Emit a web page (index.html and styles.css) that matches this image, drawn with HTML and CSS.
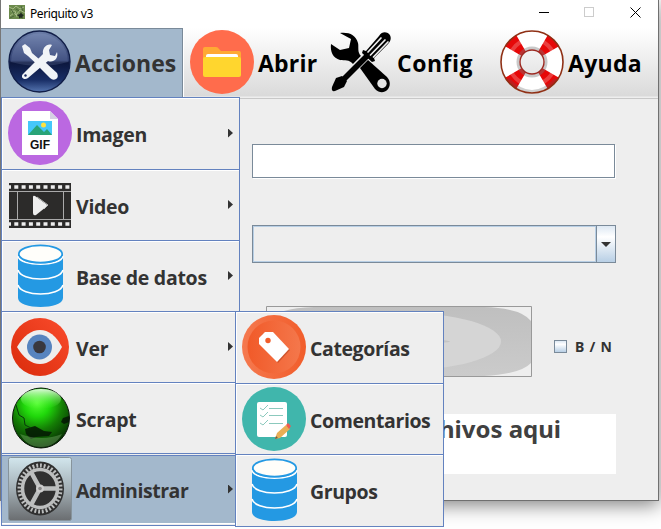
FILE: index.html
```html
<!DOCTYPE html>
<html lang="es">
<head>
<meta charset="utf-8">
<title>Periquito v3</title>
<link rel="stylesheet" href="styles.css">
</head>
<body>
<svg width="0" height="0" class="defs">
  <defs>
    <linearGradient id="navy" x1="0" y1="0" x2="0" y2="1"><stop offset="0" stop-color="#6d7fa9"/><stop offset=".48" stop-color="#303f70"/><stop offset=".52" stop-color="#0c173d"/><stop offset=".8" stop-color="#182d65"/><stop offset="1" stop-color="#5575b0"/></linearGradient>
    <linearGradient id="red" x1="1" y1="0" x2="0" y2="1"><stop offset="0" stop-color="#fa4b2c"/><stop offset="1" stop-color="#d92b0b"/></linearGradient>
    <linearGradient id="orange"><stop offset="0" stop-color="#f5794f"/><stop offset="1" stop-color="#f15d2b"/></linearGradient>
    <linearGradient id="orange2"><stop offset="0" stop-color="#f15a29"/><stop offset="1" stop-color="#f4774b"/></linearGradient>
    <radialGradient id="green" cx=".43" cy=".25" r=".75"><stop offset="0" stop-color="#55ff32"/><stop offset=".3" stop-color="#20d80b"/><stop offset=".6" stop-color="#147d05"/><stop offset="1" stop-color="#062c03"/></radialGradient>
    <linearGradient id="gloss" x1="0" y1="0" x2="0" y2="1"><stop offset="0" stop-color="#fff" stop-opacity=".85"/><stop offset="1" stop-color="#5f3" stop-opacity="0"/></linearGradient>
    <linearGradient id="steel" x1="0" y1="0" x2="0" y2="1"><stop offset="0" stop-color="#d2e6ed"/><stop offset=".5" stop-color="#a3afb5"/><stop offset="1" stop-color="#6a6d70"/></linearGradient>
    <symbol id="db" viewBox="0 0 64 64">
      <path d="M10 10v44c0 12 45 12 45 0V10z" fill="#2499e3"/>
      <path d="M10 12c2 11 43 11 45 0M10 26c3 12 42 12 45 0M10 41c3 12 42 12 45 0" fill="none" stroke="#fff" stroke-width="1.6"/>
      <ellipse cx="32.500" cy="10" rx="21.700" ry="8.700" fill="#fffefa" stroke="#2499e3" stroke-width="1.700"/>
    </symbol>
  </defs>
</svg>
<div class="desktop">
  <div class="window">
    <header class="titlebar">
      <svg class="app-icon" width="16" height="14" viewBox="0 0 16 14"><path fill="#6c8a4c" d="M0 0h16v14H0z"/><path d="M0 2l4 2 3-3 4 3 4-2M1 11l4-3 2 2 4-5 5 3M2 6h4l2 6" stroke="#a5b985" fill="none"/><path d="M2 4l3 5M7 4l3 2M12 1l2 5M1 13l4-2" stroke="#4c673b" fill="none"/><path fill="#222d22" d="M12 7l1 2 2 1-1.500 1.500v2L12 12.500l-2 1v-2L8 10l3-1z"/></svg>
      <span class="title">Periquito v3</span>
      <svg class="controls" width="104" height="12" viewBox="0 0 104 12" fill="none" shape-rendering="crispEdges"><path d="M0 6.500h10" stroke="#000"/><path d="M45.500 1.500h9v9h-9z" stroke="#ccc"/><path d="M91.500 1.500l10 10M101.500 1.500l-10 10" stroke="#000" shape-rendering="auto"/></svg>
    </header>
    <nav class="menubar">
      <div class="menu active m-actions">
        <svg class="icon" viewBox="0 0 64 64"><circle cx="31.500" cy="31.500" r="30.500" fill="url(#navy)" stroke="#111e48" stroke-width="1.400"/><path d="M3 32a28.500 28.500 0 0 1 57 0Q32 40 3 32z" fill="#a9b9df" opacity=".17"/><path d="M14 16l3-2 5 4 2 5 14 12-4 4-14-13-4-3z" fill="#f1f4f7"/><path d="M33 35l4-3 12 11q2 4-1 6-3 2-6-1L32 38z" fill="#f1f4f7"/><path d="M15 44l20-20c-1-6 4-11 9-9l-3 5 1 5 5 1 2-4c2 7-4 11-9 9L20 48c-4 3-8-1-5-4z" fill="#f1f4f7"/><circle cx="17.500" cy="45.500" r="1.200" fill="#18285c"/></svg>
        <span>Acciones</span>
      </div>
      <div class="menu m-open">
        <svg class="icon" viewBox="0 0 64 64"><circle cx="32" cy="32" r="32" fill="#ff6c4c"/><path d="M13 19q0-2 2-2h11q2 0 3 2l2 2h18q2 0 2 2v15H13z" fill="#ffa934"/><path d="M16 26q0-2 2-2h28q2 0 2 2v4H16z" fill="#fff"/><path d="M13 29q0-2 2-2h34q2 0 2 2v16q0 2-2 2H15q-2 0-2-2z" fill="#ffd62e"/></svg>
        <span>Abrir</span>
      </div>
      <div class="menu m-config">
        <svg class="icon" viewBox="0 0 64 64"><path d="M11 3c9-1 16 2 18 10 1 4-1 9 3 13l-8 8c-4-5-8-3-13-4C4 28 1 22 2 14l9 6 9-2 2-9z"/><path d="M31 38l8-8 19 17c8 9-3 21-12 12z"/><circle cx="53" cy="53.500" r="4.700" fill="#e4e4e4"/><path d="M13 51L38 25" fill="none" stroke="#e8e8e8" stroke-width="7"/><path d="M11 49l25-25 4 4-25 25z"/><path d="M3 57l4-9 6-2 5 5-3 6-9 4q-4 1-3-4z"/><path d="M34 20l3 1L50 6c3-5 8-4 10-2s3 6-1 10L45 28l1 3-3 1-10-9z"/><path d="M39 22L52 8M41.500 25L56 10M44.500 27L59 12" stroke="#eee" stroke-width="1.700" stroke-linecap="round"/></svg>
        <span>Config</span>
      </div>
      <div class="menu m-help">
        <svg class="icon" viewBox="0 0 64 64"><circle cx="32" cy="32" r="21.800" fill="none" stroke="#fff" stroke-width="19"/><circle cx="32" cy="32" r="21.800" fill="none" stroke="#e60808" stroke-width="19" pathLength="360" stroke-dasharray="29 61" stroke-dashoffset="-30.500"/><g fill="none"><circle cx="32" cy="32" r="23" stroke="#fff" stroke-width="4" opacity=".22"/><circle cx="32" cy="32" r="14" stroke="#777" stroke-width="3" opacity=".4"/><path d="M8 49q24 25 48 0" stroke="#555" stroke-width="3" opacity=".28"/><circle cx="32" cy="32" r="31" stroke="#8f3015" stroke-width="1.600"/><circle cx="32" cy="32" r="12" stroke="#9b2820" stroke-width="1.400"/></g></svg>
        <span>Ayuda</span>
      </div>
    </nav>
    <main class="content">
      <div class="field"></div>
      <div class="combo"><div class="value"></div><div class="drop"><svg width="10" height="5" viewBox="0 0 10 5"><path d="M0 0h10L5 5z" fill="#333"/></svg></div></div>
      <div class="options">
        <svg class="image-button" width="266" height="71" viewBox="0 0 266 71"><defs><linearGradient id="disc" x1="0" y1="0" x2="0" y2="1"><stop stop-color="#bfbfbf"/><stop offset="1" stop-color="#cbcbcb"/></linearGradient></defs><path fill="#eee" d="M0 0h266v71H0z"/><path d="M48 1h170q37 1 47 14v42q-10 11-47 13H48Q8 68 1 55V15Q11 2 48 1z" fill="url(#disc)"/><ellipse cx="133" cy="35.500" rx="102" ry="29" fill="#d5d5d5"/><ellipse cx="150" cy="35.500" rx="34" ry="2" fill="#c4c4c4"/><path fill="none" stroke="#999" d="M.5.5h265v70H.5z"/></svg>
        <div class="check"><i></i><span>B / N</span></div>
      </div>
      <div class="dropzone"><span>hivos aqui</span></div>
    </main>
  </div>

  <div class="popup main-popup">
    <div class="item"><svg class="icon" viewBox="0 0 64 64"><circle cx="32" cy="32" r="32" fill="#bb68e1"/><path d="M14 10h28l8 8v36H14z" fill="#fff"/><path d="M42 10l8 8h-8z" fill="#d5d1e3"/><path d="M20 20h24v14H20z" fill="#46c7fa"/><circle cx="35.500" cy="24" r="2.500" fill="#ffe240"/><path d="M20 34l9-10 7 7 3-3 5 6z" fill="#29a477"/><text x="32" y="48" text-anchor="middle" class="gif">GIF</text></svg><span>Imagen</span><b class="arrow"></b></div>
    <div class="item"><svg class="icon" viewBox="0 0 64 64"><path fill="#2c2b2a" d="M1 10h62v45H1z"/><path d="M1 14h62M1 51h62" stroke="#eee" stroke-width="3.600" stroke-dasharray="4 3.300" stroke-dashoffset="2"/><path d="M1 18.500h62M1 46.500h62M9.500 18v29M55.500 18v29" stroke="#aaa"/><path d="M25 24q0-2 2-1l11 8q2 1 0 3l-10 8q-3 1-3-2z" fill="#eee"/><path d="M29 24l11 8-4 4" fill="none" stroke="#bbb"/></svg><span>Video</span><b class="arrow"></b></div>
    <div class="item"><svg class="icon"><use href="#db"/></svg><span>Base de datos</span><b class="arrow"></b></div>
    <div class="item narrow"><svg class="icon" viewBox="0 0 64 64"><circle cx="32" cy="32" r="29" fill="url(#red)"/><path d="M9 32q10-17 23-17t22 17q-9 17-22 17T9 32z" fill="#eee"/><circle cx="31.500" cy="32" r="12.500" fill="#5784bf"/><circle cx="31.500" cy="32" r="6.300" fill="#39373d"/></svg><span>Ver</span><b class="arrow"></b></div>
    <div class="item narrow"><svg class="icon" viewBox="0 0 64 64"><ellipse cx="33" cy="32" rx="28.500" ry="30" fill="url(#green)" stroke="#0b180b"/><ellipse cx="33" cy="13" rx="20" ry="10" fill="url(#gloss)"/><path d="M17 43l10-3 9 5 8 1-3 4-13 1-5 2-5-5zM55 32l6-2v6l-5 2-3-2z" fill="#031604" opacity=".85"/><path d="M8 19l3 10 5 3 1 7 6 3" fill="none" stroke="#07390a"/><path d="M12 48q22 8 42 0-7 13-21 13T12 48z" fill="#a5d896" opacity=".3"/></svg><span>Scrapt</span></div>
    <div class="item narrow selected"><svg class="icon" viewBox="0 0 64 64"><rect x=".5" y=".5" width="63" height="63" rx="2" fill="url(#steel)" stroke="#87949c"/><ellipse cx="32" cy="31.500" rx="24" ry="27" fill="#303030"/><g fill="none" stroke="#bcbebe"><ellipse cx="32" cy="31.500" rx="20.500" ry="23" stroke-width="4" pathLength="144" stroke-dasharray="2 2"/><ellipse cx="32" cy="31.500" rx="17.500" ry="19" stroke-width="3.500"/><path d="M32 31.500L23 15M32 31.500h18M32 31.500L23 48" stroke-width="4.500"/></g><circle cx="32" cy="31.500" r="4" fill="#ccc"/><circle cx="32" cy="31.500" r="1.800" fill="#888"/></svg><span>Administrar</span><b class="arrow"></b></div>
  </div>

  <div class="popup sub-popup">
    <div class="item"><svg class="icon" viewBox="0 0 64 64"><circle cx="32" cy="32" r="32" fill="url(#orange)"/><circle cx="32" cy="32" r="26.500" fill="url(#orange2)"/><path d="M20 19l6-1 22 17-12 13-17-20z" fill="#b84420" opacity=".6"/><path d="M17 23l6-6h8l16 17-12 13L17 29z" fill="#fff"/><circle cx="26" cy="25.500" r="2.700" fill="#f15d2b"/></svg><span>Categorías</span></div>
    <div class="item"><svg class="icon" viewBox="0 0 64 64"><circle cx="32" cy="32" r="32" fill="#40b6ac"/><rect x="15" y="15" width="30" height="35" rx="2" fill="#fff"/><path d="M18 21l3 2 5-5M18 28l3 2 5-5M18 36l3 2 5-5M27 21.500h14M27 28.500h14M27 36.500h14" fill="none" stroke="#8bc9bd"/><path d="M33 52l2-6 9-8 4 4-10 9z" fill="#e9ae56"/><path d="M44 38l2-2 3 3-2 3z" fill="#f05b50"/><path d="M33 52l1-3 2 2z" fill="#705c42"/></svg><span>Comentarios</span></div>
    <div class="item"><svg class="icon"><use href="#db"/></svg><span>Grupos</span></div>
  </div>
</div>
</body>
</html>
```
FILE: styles.css
```css
* { box-sizing: border-box; }
body { margin: 0; overflow: hidden; font-family: "Open Sans", sans-serif; color: #333; }
.defs { position: absolute; }
.desktop { position: relative; width: 661px; height: 529px; overflow: hidden; background: #fff; padding-left: 1px; }
.desktop::before { content: ""; position: absolute; left: 0; top: 0; width: 1px; height: 501px; background: #777; }
.window { width: 658px; height: 501px; background: #eee; border-right: 1px solid #707070; border-bottom: 1px solid #707070; box-shadow: 0 4px 18px rgba(0,0,0,.5); }
.titlebar { height: 28px; background: #fff; display: flex; align-items: center; padding: 0 15px 4px 8px; }
.title { font: 12px "Noto Sans", sans-serif; color: #000; margin: 2px 0 0 5px; letter-spacing: -.4px; }
.controls { margin-left: auto; }
.menubar { height: 71px; display: flex; background: linear-gradient(#fff, #dadada 68px, #eee 69px, #eee 70px); border-bottom: 1px solid #c8c8c8; color: #000; }
.menu { display: flex; align-items: center; font-size: 23px; font-weight: 700; height: 70px; padding-bottom: 2px; white-space: nowrap; }
.menu span { margin-left: 4px; padding-top: 2px; }
.icon { display: block; width: 64px; height: 64px; flex: none; }
.m-actions { width: 182px; padding: 0 0 4px 7px; border-top: 1px solid #7a8a99; border-right: 1px solid #7a8a99; background: #a3b8cc; color: #333; box-shadow: 1px 0 #fff; letter-spacing: .05px; }
.m-actions span { margin-left: 3px; }
.m-open { width: 139px; padding-left: 7px; letter-spacing: .2px; }
.m-config { width: 170px; padding-left: 7px; letter-spacing: .5px; }
.m-help { padding-left: 8px; letter-spacing: .3px; }
.content { display: flex; flex-direction: column; padding: 45px 42px 0 251px; }
.field { height: 34px; width: 363px; background: #fff; border: 1px solid #7a8a99; box-shadow: 1px 1px #fff; }
.combo { display: flex; width: 364px; height: 38px; margin-top: 47px; border: 1px solid #7a8a99; }
.value { flex: 1; border: 1px solid #b8cfe5; }
.drop { width: 19px; border-left: 1px solid #7a8a99; display: grid; place-items: center; background: linear-gradient(#dde8f3, #fff 30%, #b8cfe5); }
.options { display: flex; align-items: center; margin: 43px 0 0 14px; }
.check { display: flex; align-items: center; margin: 10px 0 0 22px; font: bold 14px "Noto Sans", sans-serif; letter-spacing: .8px; white-space: nowrap; }
.check i { width: 13px; height: 13px; border: 1px solid #7a8a99; background: linear-gradient(#dde8f3, #fff 30%, #b8cfe5); margin-right: 8px; }
.dropzone { width: 364px; height: 60px; margin-top: 37px; background: #fff; text-align: right; padding-right: 55px; font: bold 24px/30px "Noto Sans", sans-serif; color: #404040; }
.popup { position: absolute; background: #eee; border: 1px solid #6382bf; font-size: 19.5px; font-weight: 700; letter-spacing: -.28px; }
.main-popup { left: 1px; top: 97px; width: 239px; height: 429px; }
.sub-popup { left: 235px; top: 311px; width: 209px; height: 216px; letter-spacing: -.4px; }
.item { height: 71px; display: flex; align-items: center; padding: 0 6px 1px 6px; border-bottom: 1px solid #6382bf; box-shadow: inset 1px 1px #fff; white-space: nowrap; }
.item:first-child { height: 72px; }
.sub-popup .item:last-child { border-bottom: 0; }
.item span { margin-left: 4px; padding-top: 3px; }
.arrow { width: 5px; height: 9px; margin: 0 0 0 auto; background: #333; clip-path: polygon(0 0, 100% 50%, 0 100%); }
.item.selected { height: 69px; margin-top: 1px; background: #a3b8cc; border-top: 1px solid #6382bf; border-bottom: 1px solid #fff; box-shadow: none; padding-bottom: 1px; letter-spacing: -.45px; }
.item.selected span { padding-top: 2px; }
.gif { font: bold 12px "Liberation Sans", sans-serif; fill: #111; letter-spacing: 0; }
```
